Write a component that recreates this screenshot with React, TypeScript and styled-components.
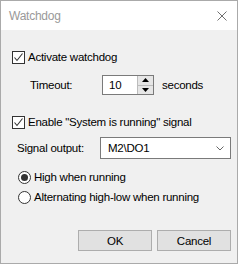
import React from 'react'
import styled, { createGlobalStyle } from 'styled-components'

const GlobalStyle = createGlobalStyle`
  html, body {
    margin: 0;
    padding: 0;
    background: #f0f0f0;
  }
  * {
    box-sizing: border-box;
  }
`

export default function App() {
  return (
    <>
      <GlobalStyle />
      <Window>
        <TitleBar>
          <TitleText>Watchdog</TitleText>
          <CloseButton>
            <svg width="10" height="10" viewBox="0 0 10 10">
              <path d="M0.5 0.5 L9.5 9.5 M9.5 0.5 L0.5 9.5" stroke="#6f6f6f" strokeWidth="1" fill="none" />
            </svg>
          </CloseButton>
        </TitleBar>
        <Body>
          <Row $top={17}>
            <CheckBox checked />
            <Label>Activate watchdog</Label>
          </Row>
          <Row $top={8} $indent={18}>
            <FieldLabel $width={72}>Timeout:</FieldLabel>
            <SpinBox>
              <SpinValue>10</SpinValue>
              <SpinButtons>
                <SpinButton>
                  <svg width="7" height="4" viewBox="0 0 7 4">
                    <path d="M3.5 0 L7 4 L0 4 Z" fill="#000" />
                  </svg>
                </SpinButton>
                <SpinButton>
                  <svg width="7" height="4" viewBox="0 0 7 4">
                    <path d="M0 0 L7 0 L3.5 4 Z" fill="#000" />
                  </svg>
                </SpinButton>
              </SpinButtons>
            </SpinBox>
            <Label $left={8}>seconds</Label>
          </Row>
          <Row $top={17}>
            <CheckBox checked />
            <Label>Enable "System is running" signal</Label>
          </Row>
          <Row $top={5} $indent={5} $height={22}>
            <FieldLabel $width={83}>Signal output:</FieldLabel>
            <Select>
              <span>M2\DO1</span>
              <svg width="8" height="5" viewBox="0 0 8 5">
                <path d="M0.5 0.5 L4 4 L7.5 0.5" stroke="#666" strokeWidth="1" fill="none" />
              </svg>
            </Select>
          </Row>
          <Row $top={8} $indent={6}>
            <Radio checked />
            <Label>High when running</Label>
          </Row>
          <Row $indent={6}>
            <Radio />
            <Label>Alternating high-low when running</Label>
          </Row>
          <ButtonBar>
            <Button>OK</Button>
            <Button>Cancel</Button>
          </ButtonBar>
        </Body>
      </Window>
    </>
  )
}

function CheckBox({ checked }: { checked?: boolean }) {
  return (
    <CheckFrame>
      {checked && (
        <svg width="11" height="11" viewBox="0 0 11 11">
          <path d="M1.5 5.5 L4 8.5 L9.5 1.5" stroke="#333" strokeWidth="1.1" fill="none" />
        </svg>
      )}
    </CheckFrame>
  )
}

function Radio({ checked }: { checked?: boolean }) {
  return <RadioFrame>{checked && <RadioDot />}</RadioFrame>
}

const Window = styled.div`
  width: 238px;
  height: 264px;
  border: 1px solid #aaaaaa;
  background: #f0f0f0;
  display: flex;
  flex-direction: column;
  font-family: 'Segoe UI', 'Liberation Sans', Arial, sans-serif;
  font-size: 11.5px;
  letter-spacing: -0.25px;
  color: #000;
`

const TitleBar = styled.div`
  height: 29px;
  background: #fff;
  display: flex;
  align-items: center;
  justify-content: space-between;
  padding: 0 10px 0 8px;
  flex-shrink: 0;
`

const TitleText = styled.span`
  color: #999;
  font-size: 12px;
`

const CloseButton = styled.div`
  width: 10px;
  height: 10px;
  display: flex;
`

const Body = styled.div`
  display: flex;
  flex-direction: column;
  padding: 0 6px 0 11px;
  flex: 1;
`

const Row = styled.div<{ $top?: number; $indent?: number; $height?: number }>`
  display: flex;
  align-items: center;
  height: ${(p) => p.$height ?? 20}px;
  margin-top: ${(p) => p.$top ?? 0}px;
  padding-left: ${(p) => p.$indent ?? 0}px;
`

const Label = styled.span<{ $left?: number }>`
  white-space: nowrap;
  margin-left: ${(p) => p.$left ?? 0}px;
`

const FieldLabel = styled.span<{ $width: number }>`
  width: ${(p) => p.$width}px;
  white-space: nowrap;
`

const CheckFrame = styled.div`
  width: 13px;
  height: 13px;
  border: 1px solid #333;
  background: #fff;
  margin-right: 3px;
  display: flex;
  align-items: center;
  justify-content: center;
`

const RadioFrame = styled.div`
  width: 13px;
  height: 13px;
  border: 1px solid #333;
  border-radius: 50%;
  background: #fff;
  margin-right: 3px;
  display: flex;
  align-items: center;
  justify-content: center;
`

const RadioDot = styled.div`
  width: 7px;
  height: 7px;
  border-radius: 50%;
  background: #333;
`

const SpinBox = styled.div`
  width: 52px;
  height: 20px;
  border: 1px solid #7a7a7a;
  background: #fff;
  display: flex;
`

const SpinValue = styled.span`
  flex: 1;
  padding-left: 6px;
  line-height: 18px;
`

const SpinButtons = styled.div`
  width: 16px;
  display: flex;
  flex-direction: column;
  border-left: 1px solid #bcbcbc;
`

const SpinButton = styled.div`
  flex: 1;
  display: flex;
  align-items: center;
  justify-content: center;
  background: #e6e6e6;
  & + & {
    border-top: 1px solid #bcbcbc;
  }
`

const Select = styled.div`
  width: 131px;
  height: 22px;
  border: 1px solid #7a7a7a;
  background: #fff;
  display: flex;
  align-items: center;
  justify-content: space-between;
  padding: 0 6px 0 7px;
`

const ButtonBar = styled.div`
  display: flex;
  justify-content: flex-end;
  gap: 5px;
  margin-top: 23px;
`

const Button = styled.div`
  width: 74px;
  height: 21px;
  background: #e1e1e1;
  border: 1px solid #adadad;
  display: flex;
  align-items: center;
  justify-content: center;
`
